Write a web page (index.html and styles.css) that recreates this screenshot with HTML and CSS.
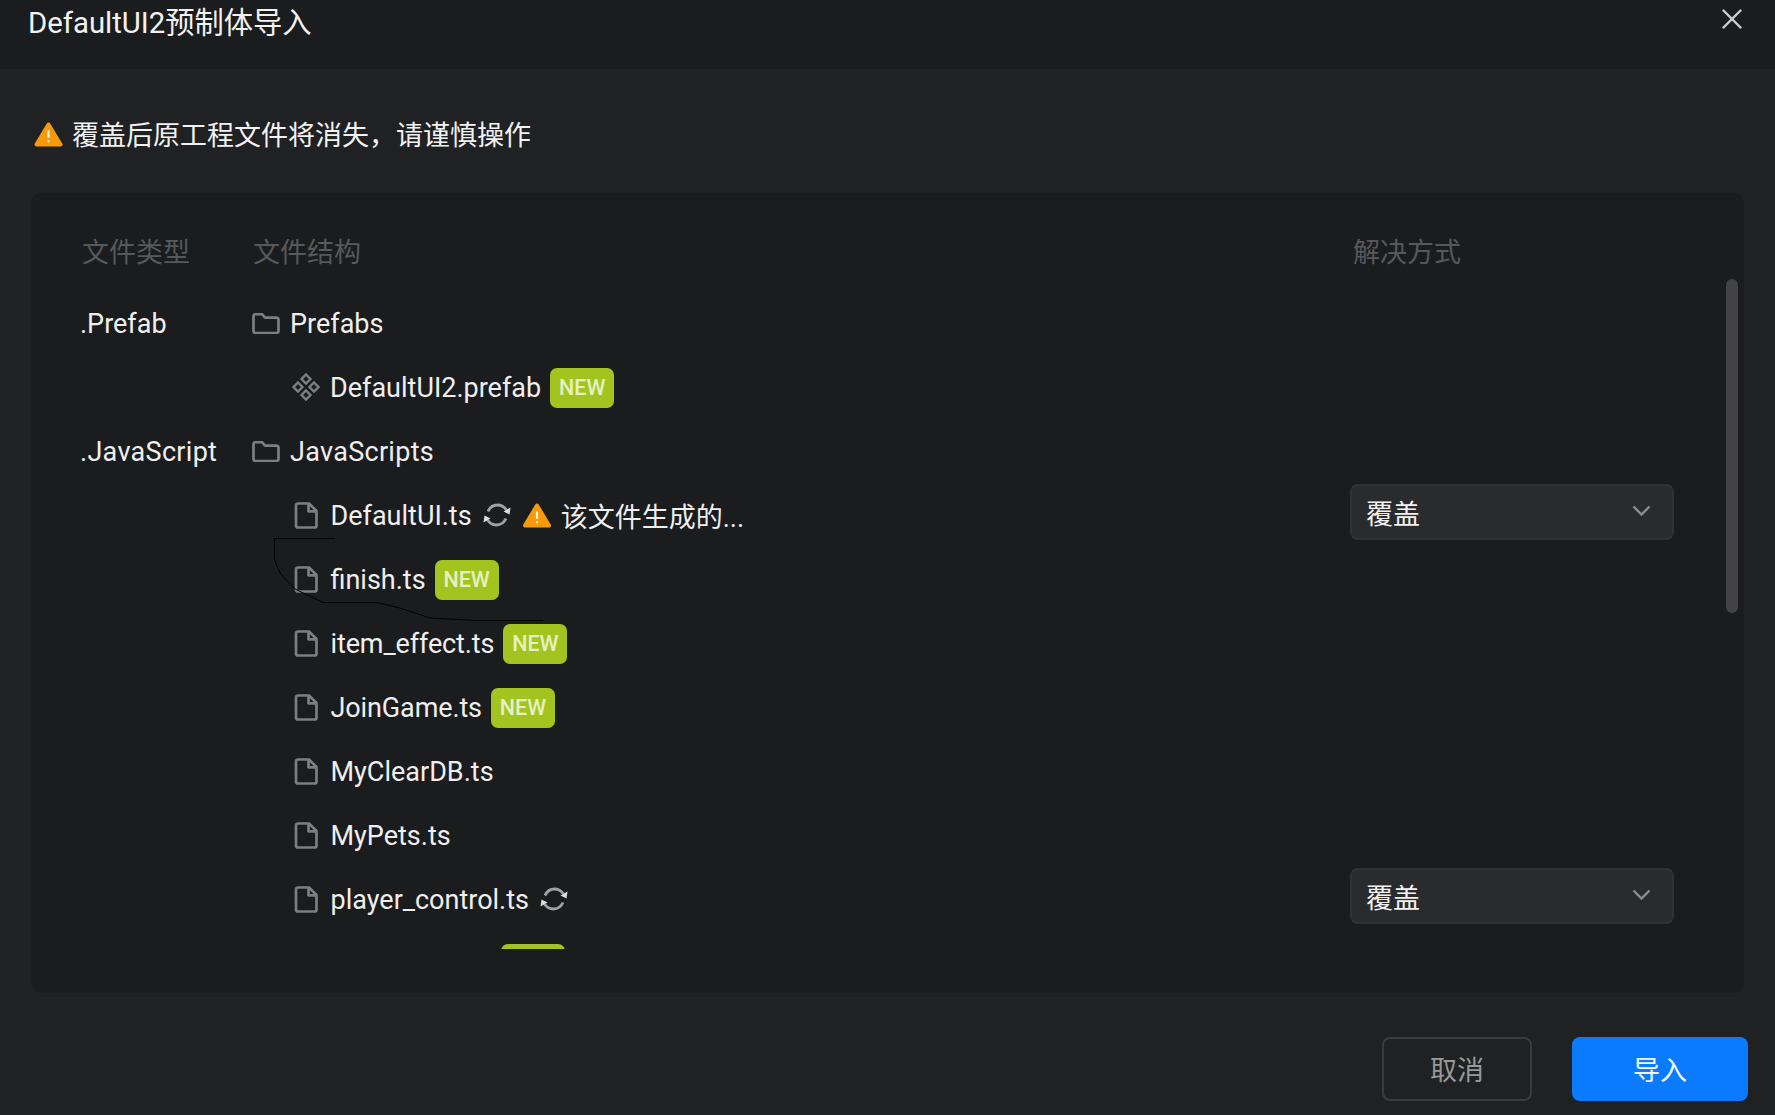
FILE: index.html
```html
<!DOCTYPE html>
<html lang="zh">
<head>
<meta charset="utf-8">
<title>DefaultUI2预制体导入</title>
<link rel="stylesheet" href="styles.css">
</head>
<body>
<svg class="defs" width="0" height="0" aria-hidden="true">
  <symbol id="i-folder" viewBox="0 0 28 21"><path d="M1.500 3.500C1.500 1.900 2.300 1.200 3.700 1.200H10L13 4.600H24.300C25.800 4.600 26.500 5.400 26.500 6.800V17.800C26.500 19.200 25.800 20 24.300 20H3.700C2.300 20 1.500 19.200 1.500 17.800Z" fill="none" stroke="#7d7e80" stroke-width="2.700" stroke-linejoin="round"/></symbol>
  <symbol id="i-file" viewBox="0 0 24 27"><path d="M2 3.500C2 2.300 2.700 1.500 4 1.500H15L22.500 9V23.500C22.500 24.800 21.700 25.500 20.500 25.500H4C2.700 25.500 2 24.800 2 23.500ZM14.500 1.500V9.300H22.500" fill="none" stroke="#7d7e80" stroke-width="2.700" stroke-linejoin="round"/></symbol>
  <symbol id="i-prefab" viewBox="0 0 28 28"><g fill="none" stroke="#7d7e80" stroke-width="2.400"><path d="M14 1.500 18.500 6 14 10.500 9.500 6Z"/><path d="M14 17.500 18.500 22 14 26.500 9.500 22Z"/><path d="M6 9.500 10.500 14 6 18.500 1.500 14Z"/><path d="M22 9.500 26.500 14 22 18.500 17.500 14Z"/></g></symbol>
  <symbol id="i-sync" viewBox="0 0 28 24"><g fill="none" stroke="#a0a1a2" stroke-width="2.800"><path d="M5 8.500C7 4 10.500 2 14.500 2C18.500 2 21.500 4 23.500 7"/><path d="M23 15.500C21 20 17.500 22 13.500 22C9.500 22 6.500 20 4.500 17"/></g><path d="M27.500 4.500 26.500 11.500 20.500 8.500Z" fill="#dcdcdc"/><path d="M.5 19.500 1.500 12.500 7.500 15.500Z" fill="#dcdcdc"/></symbol>
  <symbol id="i-warn" viewBox="0 0 28 25"><path d="M14 2.500 26 22.500H2Z" fill="#f59a0b" stroke="#f59a0b" stroke-width="4" stroke-linejoin="round"/><rect x="12.900" y="8" width="2.200" height="8" rx="1.100" fill="#fff1da"/><rect x="12.900" y="18" width="2.200" height="2.400" rx="1.100" fill="#fff1da"/></symbol>
</svg>

<div class="dialog">
  <header class="head">
    <h1 class="title">DefaultUI2预制体导入</h1>
    <button class="close" aria-label="关闭"><svg width="20" height="20" viewBox="0 0 20 20"><path d="M1.500 1.500 18.500 18.500M18.500 1.500 1.500 18.500" stroke="#cfcfcf" stroke-width="2.400" stroke-linecap="round"/></svg></button>
  </header>

  <div class="notice">
    <svg class="notice-icon" width="29" height="25"><use href="#i-warn"/></svg>
    <span>覆盖后原工程文件将消失，请谨慎操作</span>
  </div>

  <section class="panel">
    <div class="row labels">
      <span class="label">文件类型</span><span class="label">文件结构</span><span class="label-way">解决方式</span>
    </div>
    <div class="list">
      <div class="row">
        <span class="kind">.Prefab</span>
        <div class="item"><svg class="ic" width="28" height="21"><use href="#i-folder"/></svg><span>Prefabs</span></div>
      </div>
      <div class="row">
        <span></span>
        <div class="item deep"><svg class="ic" width="28" height="28"><use href="#i-prefab"/></svg><span>DefaultUI2.prefab</span><span class="new">NEW</span></div>
      </div>
      <div class="row">
        <span class="kind wide">.JavaScript</span>
        <div class="item"><svg class="ic" width="28" height="21"><use href="#i-folder"/></svg><span class="wide">JavaScripts</span></div>
      </div>
      <div class="row">
        <span></span>
        <div class="item deep"><svg class="ic file" width="24" height="27"><use href="#i-file"/></svg><span>DefaultUI.ts</span>
          <svg class="sync" width="28" height="24"><use href="#i-sync"/></svg>
          <svg class="warn" width="28" height="25"><use href="#i-warn"/></svg>
          <span class="warn-text">该文件生成的...</span></div>
        <div class="select"><span>覆盖</span><svg width="19" height="11" viewBox="0 0 19 11"><path d="M1.500 1.500 9.500 9.500 17.500 1.500" fill="none" stroke="#8c8d8e" stroke-width="2.400"/></svg></div>
      </div>
      <div class="row">
        <span></span>
        <div class="item deep"><svg class="ic file" width="24" height="27"><use href="#i-file"/></svg><span>finish.ts</span><span class="new">NEW</span></div>
      </div>
      <div class="row">
        <span></span>
        <div class="item deep"><svg class="ic file" width="24" height="27"><use href="#i-file"/></svg><span class="tight">item_effect.ts</span><span class="new">NEW</span></div>
      </div>
      <div class="row">
        <span></span>
        <div class="item deep"><svg class="ic file" width="24" height="27"><use href="#i-file"/></svg><span class="tight">JoinGame.ts</span><span class="new">NEW</span></div>
      </div>
      <div class="row">
        <span></span>
        <div class="item deep"><svg class="ic file" width="24" height="27"><use href="#i-file"/></svg><span>MyClearDB.ts</span></div>
      </div>
      <div class="row">
        <span></span>
        <div class="item deep"><svg class="ic file" width="24" height="27"><use href="#i-file"/></svg><span>MyPets.ts</span></div>
      </div>
      <div class="row">
        <span></span>
        <div class="item deep"><svg class="ic file" width="24" height="27"><use href="#i-file"/></svg><span>player_control.ts</span>
          <svg class="sync" width="28" height="24"><use href="#i-sync"/></svg></div>
        <div class="select"><span>覆盖</span><svg width="19" height="11" viewBox="0 0 19 11"><path d="M1.500 1.500 9.500 9.500 17.500 1.500" fill="none" stroke="#8c8d8e" stroke-width="2.400"/></svg></div>
      </div>
      <div class="row">
        <span></span>
        <div class="item clipped"><span class="new">NEW</span></div>
      </div>
    </div>
    <div class="scrollbar"></div>
  </section>

  <footer class="foot">
    <button class="btn cancel">取消</button>
    <button class="btn ok">导入</button>
  </footer>

  <svg class="scribble" width="1775" height="1115" aria-hidden="true"><path d="M335 538.500H274.500V560L280 573 295 589 323 602.500H377L400 608 430 618 477 620.500H543" fill="none" stroke="#000" stroke-width="1"/></svg>
</div>
</body>
</html>
```
FILE: styles.css
```css
* { box-sizing: border-box; }
html, body { margin: 0; padding: 0; background: #202123; }
body { font-family: Roboto, "Noto Sans CJK SC", sans-serif; color: #efefef; font-size: 27px; }
.defs { position: absolute; }

.dialog { position: relative; width: 1775px; height: 1115px; display: flex; flex-direction: column; overflow: hidden; }

.head { height: 69px; flex: none; background: #1b1c1e; display: flex; justify-content: space-between; align-items: flex-start; padding: 0 33px 0 28px; }
.title { margin: 0; font-size: 29.300px; font-weight: 400; line-height: 47px; color: #f2f2f2; }
.close { border: 0; padding: 0; background: none; margin-top: 9px; width: 20px; height: 20px; display: block; }
.close svg { display: block; }

.notice { height: 124px; flex: none; display: flex; align-items: center; padding: 10px 0 0 34px; color: #f2f2f2; line-height: 40px; }
.notice-icon { flex: none; margin: -4px 9px 0 0; }

.panel { position: relative; flex: none; height: 800px; margin: 0 31px; padding: 27px 0 0 50px; background: #1b1c1e; border-radius: 10px; }

.row { display: grid; grid-template-columns: 171px 1098px 324px; height: 64px; line-height: 64px; }
.labels { color: #57585a; line-height: 66px; }
.label { padding-left: 1px; }
.label-way { padding-left: 3px; }
.list { margin-top: 7px; height: 658px; overflow: hidden; }

.kind { margin-left: -1px; line-height: 66px; }
.wide { letter-spacing: .3px; }
.tight { letter-spacing: -.12px; }
.item { display: flex; align-items: center; gap: 10px; height: 64px; white-space: nowrap; }
.item > span { padding-top: 2px; line-height: 62px; }
.ic { flex: none; display: block; }
.deep { padding-left: 40px; }
.ic.file { margin: 0 2.500px 0 2px; }
.deep > .ic { margin-right: 0; }
.deep > .ic.file { margin-right: 2.500px; }
.item > .new { flex: none; width: 64px; height: 40px; margin: 2px 0 0 -1px; padding: 0; line-height: 40px; text-align: center; font-size: 21.500px; font-weight: 500; color: #e6f0c2; background: #a3c41f; border-radius: 7px; }
.sync { flex: none; margin-left: 1px; }
.warn { flex: none; margin-left: 2px; }
.item > .warn-text { margin-left: 0; padding-top: 6px; line-height: 58px; }
.clipped { padding-left: 250px; }

.select { height: 56px; margin-top: 1px; display: flex; align-items: center; justify-content: space-between; padding: 0 21px 0 14px; background: #2a2b2d; border: 2px solid #303133; border-radius: 8px; color: #f2f2f2; line-height: 46px; }
.select span { padding-top: 6px; }
.select svg { margin-top: -3px; }

.scrollbar { position: absolute; right: 6px; top: 86px; width: 12px; height: 334px; background: #434345; border-radius: 6px; }

.foot { flex: 1; display: flex; justify-content: flex-end; gap: 40px; padding: 44px 27px 0 0; }
.btn { height: 64px; border-radius: 8px; font: inherit; padding: 0 0 2px; }
.cancel { width: 150px; background: transparent; border: 2px solid #3a3b3d; color: #98999a; }
.ok { width: 176px; background: #0a7bff; border: 0; color: #f2f7ff; }

.scribble { position: absolute; left: 0; top: 0; pointer-events: none; }
```
